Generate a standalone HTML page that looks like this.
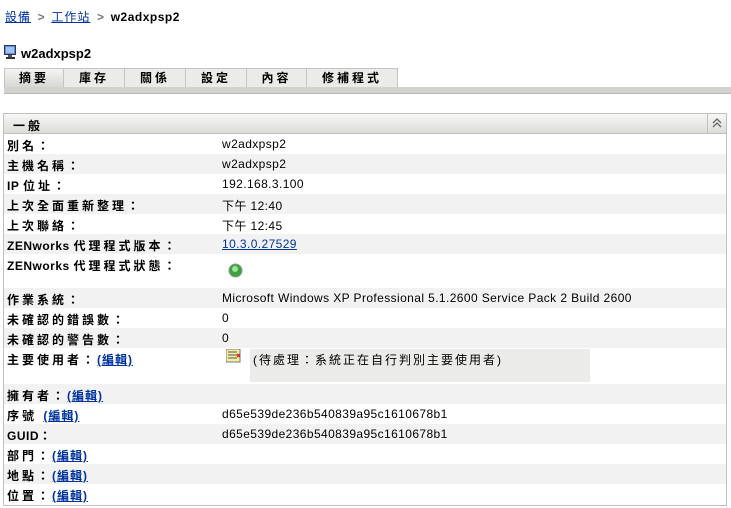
<!DOCTYPE html>
<html><head><meta charset="utf-8"><style>
*{margin:0;padding:0;box-sizing:border-box}
body{width:731px;height:508px;background:#fff;font-family:"Liberation Sans","Noto Sans CJK TC",sans-serif;font-size:12px;color:#000;position:relative;overflow:hidden}
.a{position:absolute;white-space:nowrap}
a{color:#0033a0;text-decoration:underline}
.lab a{letter-spacing:1px}
.b{font-weight:bold}
.row{position:absolute;left:4px;width:722px;height:20px}
.g{background:#f2f2f2}
.lab{position:absolute;left:3px;top:3px;font-weight:bold;white-space:nowrap;letter-spacing:3px}
.lat{letter-spacing:0.5px}
.val{position:absolute;left:218px;top:3px;white-space:nowrap;letter-spacing:0.4px}
.tab{position:absolute;top:68px;height:20px;border:1px solid #c4c4c4;border-bottom:none;background:#ebebe9;font-weight:bold;text-align:center;line-height:19px;letter-spacing:3px}
</style></head><body>
<div class="a" style="left:5px;top:8px"><a href="#" style="letter-spacing:1px">設備</a><span style="color:#777;font-weight:bold">&nbsp;&nbsp;&gt;&nbsp;&nbsp;</span><a href="#" style="letter-spacing:1px">工作站</a><span style="color:#777;font-weight:bold">&nbsp;&nbsp;&gt;&nbsp;&nbsp;</span><span class="b" style="letter-spacing:0.5px">w2adxpsp2</span></div>
<svg class="a" style="left:4px;top:45px" width="13" height="14"><rect x="0.5" y="0.5" width="11" height="9" fill="#5f8fd8" stroke="#335"/><rect x="2" y="2" width="8" height="6" fill="#9cc4f5"/><rect x="4" y="10" width="4" height="2" fill="#555"/><rect x="2" y="12" width="9" height="2" fill="#333"/></svg>
<div class="a b" style="left:21px;top:46px;font-size:13px">w2adxpsp2</div>
<div class="tab" style="left:4px;width:60px;background:linear-gradient(#f4f4f2,#d5d5d2)">摘要</div>
<div class="tab" style="left:63px;width:62px">庫存</div>
<div class="tab" style="left:124px;width:62px">關係</div>
<div class="tab" style="left:185px;width:62px">設定</div>
<div class="tab" style="left:246px;width:61px">內容</div>
<div class="tab" style="left:306px;width:92px">修補程式</div>
<div class="a" style="left:4px;top:87px;width:727px;height:7px;background:#d2d2cf;border-bottom:1px solid #b8b8b5"></div>
<div class="a" style="left:3px;top:113px;width:724px;height:393px;border:1px solid #c0c0c0"></div>
<div class="a" style="left:4px;top:114px;width:722px;height:20px;background:linear-gradient(#f7f7f5,#dcdcd9);border-bottom:1px solid #c0c0c0"></div>
<div class="a b" style="left:13px;top:117px;letter-spacing:3px">一般</div>
<div class="a" style="left:707px;top:114px;width:19px;height:20px;border-left:1px solid #c0c0c0"></div>
<svg class="a" style="left:711px;top:117px" width="12" height="12"><path d="M2 6 L6 2 L10 6 M2 10 L6 6 L10 10" fill="none" stroke="#666" stroke-width="1.3"/></svg>

<div class="row" style="top:134px"><span class="lab">別名：</span><span class="val">w2adxpsp2</span></div>
<div class="row g" style="top:154px"><span class="lab">主機名稱：</span><span class="val">w2adxpsp2</span></div>
<div class="row" style="top:174px"><span class="lab"><span class="lat">IP </span>位址：</span><span class="val">192.168.3.100</span></div>
<div class="row g" style="top:194px"><span class="lab">上次全面重新整理：</span><span class="val">下午 12:40</span></div>
<div class="row" style="top:214px"><span class="lab">上次聯絡：</span><span class="val">下午 12:45</span></div>
<div class="row g" style="top:234px"><span class="lab"><span class="lat">ZENworks </span>代理程式版本：</span><span class="val"><a href="#">10.3.0.27529</a></span></div>
<div class="row" style="top:254px;height:34px"><span class="lab"><span class="lat">ZENworks </span>代理程式狀態：</span>
<svg class="a" style="left:224px;top:9px" width="15" height="15"><circle cx="7.5" cy="7.5" r="6.5" fill="#3aa43a" stroke="#999"/><circle cx="7" cy="6" r="3" fill="#9be39b"/></svg></div>
<div class="row g" style="top:288px"><span class="lab">作業系統：</span><span class="val">Microsoft Windows XP Professional 5.1.2600 Service Pack 2 Build 2600</span></div>
<div class="row" style="top:308px"><span class="lab">未確認的錯誤數：</span><span class="val">0</span></div>
<div class="row g" style="top:328px"><span class="lab">未確認的警告數：</span><span class="val">0</span></div>
<div class="row" style="top:348px;height:36px"><span class="lab">主要使用者：<a href="#">(編輯)</a></span>
<svg class="a" style="left:222px;top:1px" width="16" height="14"><rect x="0" y="0" width="14" height="13" fill="#f4eea0" stroke="#777"/><path d="M2 3h9M2 6h9M2 9h9" stroke="#555"/><path d="M11 5l3 3M14 5l-3 3" stroke="#d22" stroke-width="1.5"/></svg>
<div class="a" style="left:246px;top:1px;width:340px;height:33px;background:#ebebe9;padding:2px 3px;letter-spacing:2px">(待處理：系統正在自行判別主要使用者)</div></div>
<div class="row g" style="top:384px"><span class="lab">擁有者：<a href="#">(編輯)</a></span></div>
<div class="row" style="top:404px"><span class="lab">序號 <a href="#">(編輯)</a></span><span class="val">d65e539de236b540839a95c1610678b1</span></div>
<div class="row g" style="top:424px"><span class="lab"><span class="lat">GUID</span>：</span><span class="val">d65e539de236b540839a95c1610678b1</span></div>
<div class="row" style="top:444px"><span class="lab">部門：<a href="#">(編輯)</a></span></div>
<div class="row g" style="top:464px"><span class="lab">地點：<a href="#">(編輯)</a></span></div>
<div class="row" style="top:484px"><span class="lab">位置：<a href="#">(編輯)</a></span></div>
</body></html>
